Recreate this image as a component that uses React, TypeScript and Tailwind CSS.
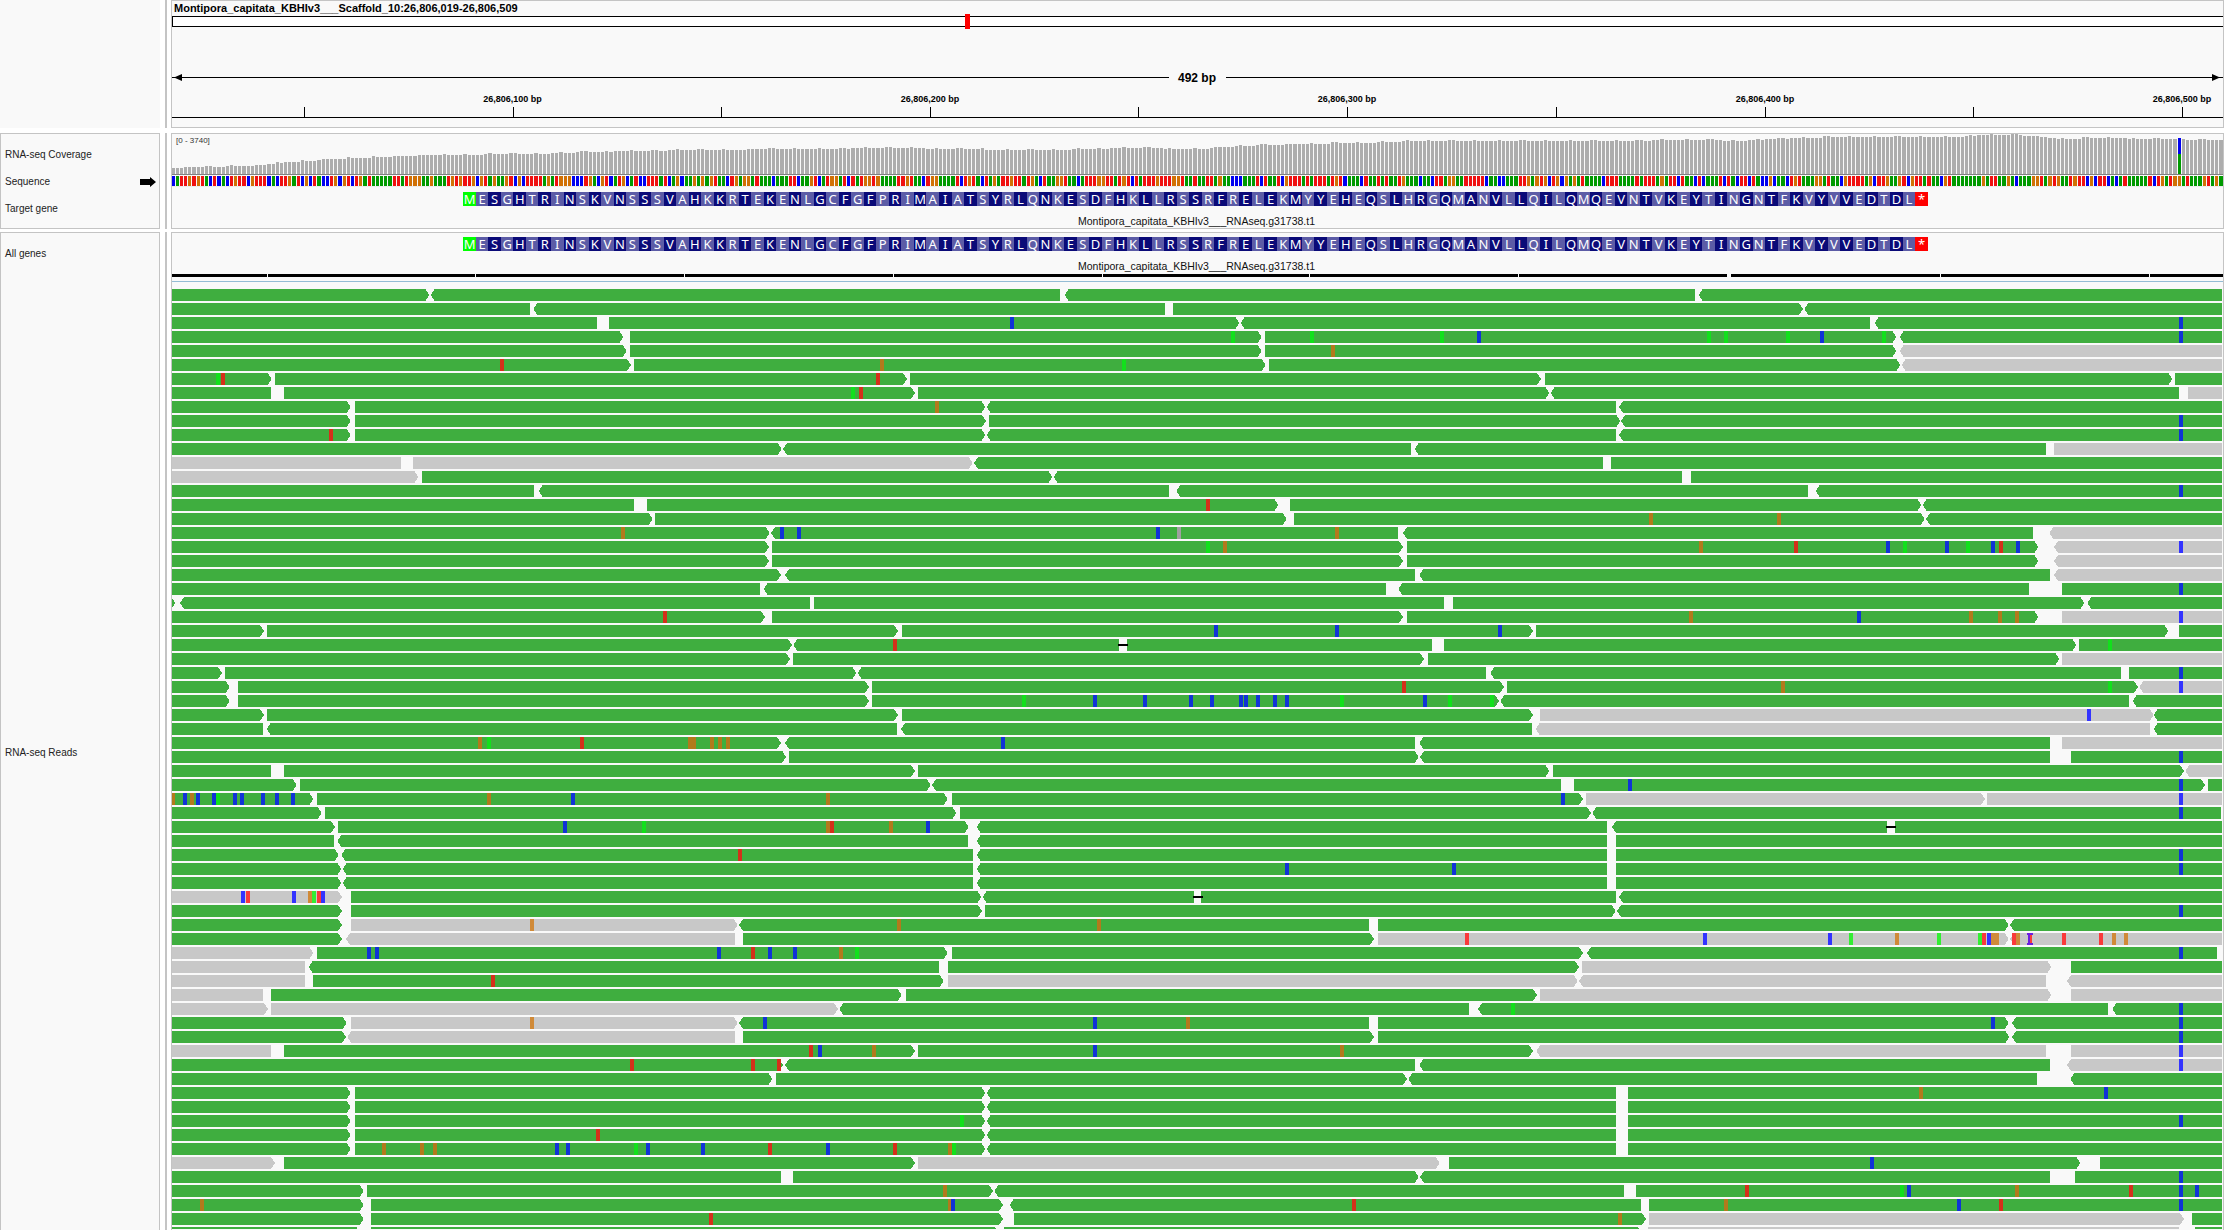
import React from "react";

const SANS = "font-['Liberation_Sans',Arial,sans-serif]";
const AA = "MESGHTRINSKVNSSSVAHKKRTEKENLGCFGFPRIMAIATSYRLQNKESDFHKLLRSSRFRELEKMYYEHEQSLHRGQMANVLLQILQMQEVNTVKEYTINGNTFKVYVVEDTDL*";
const GENE = "Montipora_capitata_KBHIv3___RNAseq.g31738.t1";
const PANEL_X = 172;
const BASE = 2052 / 492;

// [reads, marks] per row. Numbers are positions in a 1.5223x scale of the track; R adds 1568.
const ROWS: [string, string][] = [
  ["0-395> 397-1355< 1362-R753< R759-R1556<", ""],
  ["0-548 553-1515< 1527-R918> R920-R1556<", ""],
  ["0-650 668-R60> R62-R1020< R1027-R1556<", "b1282 bR1493"],
  ["0-690> 700-R94> R99-R1060> R1065-R1556<", "lR50 lR171 lR368 bR425 lR775 lR801 lR895 bR947 lR1041 bR1493"],
  ["0-695> 700-R94> R99-R1060> R1065-R1556<g", "oR202"],
  ["0-702> 706-R100> R105-R1066> R1068-R1556<g", "r505 o1084 l1452"],
  ["0-155> 160-1122> 1127-R519> R525-R1480> R1484-R1556", "l73 r80 r1078"],
  ["0-154 174-1134> 1139-R532> R534-R1490< R1504-R1556g", "l1040 r1052"],
  ["0-275> 282-1241> 1243-R633< R638-R1556<", "o1168"],
  ["0-275> 282-1242> 1247-R640> R641-R1556<", "bR1493"],
  ["0-275> 282-1241> 1243-R633< R638-R1556<", "r245 bR1493"],
  ["0-931> 933-R321< R327-R1288< R1300-R1556g", ""],
  ["0-352g 370-1222>g 1224-R613< R626-R1556", ""],
  ["0-378>g 384-1343> 1345-R734< R747-R1556", ""],
  ["0-554 561-1521< 1532-R926< R937-R1556<", "bR1493"],
  ["0-706 726-R119> R137-R1098> R1100-R1556<", "rR12"],
  ["0-735> 738-R132> R143-R1103> R1105-R1556<", "oR686 oR882"],
  ["0-913> 915-R301< R309-R1268< R1293-R1556<g", "o690 b932 b958 b1504 k1536 oR208"],
  ["0-912> 916-R309> R315-R1276> R1300-R1556<g", "lR12 oR38 oR762 rR908 bR1047 lR1073 bR1137 lR1169 bR1207 rR1219 bR1245 bR1493"],
  ["0-912> 916-R309> R315-R1276> R1300-R1556<g", ""],
  ["0-930> 936-R327< R334-R1294< R1300-R1556<g", ""],
  ["0-898 904-R283< R302-R1262< R1312-R1556", "bR1493"],
  ["0-8> 15-974< 980-R371 R385-R1346> R1351-R1556<", ""],
  ["0-906> 916-R309> R315-R1276> R1312-R1556g", "r754 oR748 bR1003 oR1174 oR1218 oR1244 bR1493"],
  ["0-143> 148-1108> 1114-R507> R512-R1474> R1490-R1556", "bR24 bR209 bR457"],
  ["0-947> 949-1445< 1457-R353 R371-R1334> R1338-R1556", "r1104 d1445 lR1385"],
  ["0-944> 948-R341> R347-R1308> R1312-R1556g", ""],
  ["0-79> 84-1045> 1047-R435< R442-R1402< R1414-R1556", "bR1493"],
  ["0-91> 104-1064> 1069-R463> R467-R1428> R1430-R1556<g", "rR311 oR888 lR1385 bR1493"],
  ["0-91> 104-1064> 1069-R455> R457-R1414< R1420-R1556<", "l1300 b1408 b1484 b1554 bR18 bR62 bR70 bR88 bR114 bR132 lR216 bR342 lR381 lR444"],
  ["0-143> 148-1108> 1114-R507> R518-R1452>g R1452-R1556<", "bR1353"],
  ["0-142 147-1107< 1113-R505< R511-R1446<g R1452-R1556<", ""],
  ["0-930> 936-R327< R334-R1294< R1312-R1556g", "o472 l486 r627 o792 o798 o825 o837 o849 b1268"],
  ["0-938> 942-R333> R335-R1294< R1326-R1556", "bR1493"],
  ["0-154 174-1134> 1139-R532> R537-R1498> R1500-R1556<g", ""],
  ["0-193> 198-1158> 1160-R550< R569-R1530> R1535-R1556", "bR655 bR1493"],
  ["0-218> 224-1184> 1190-R583> R588-R1195>g R1198-R1556g", "o5 b23 o34 b42 b67 l73 b99 b110 b142 b163 b188 o486 b613 o1002 bR553 bR1493"],
  ["0-231> 236-1197> 1203-R595> R597-R1554<", "bR1493"],
  ["0-251> 256-1216> 1228-R620< R627-R1046< R1058-R1556", "b601 l722 o1002 r1008 o1098 b1154 dR1046"],
  ["0-250 255-1215< 1228-R620< R633-R1556", ""],
  ["0-257> 261-1222< 1228-R620< R633-R1556", "r868 bR1493"],
  ["0-261> 263-1222< 1228-R620< R633-R1556", "bR132 bR387 bR1493"],
  ["0-261> 263-1222< 1228-R620< R633-R1556", ""],
  ["0-262>g 276-1235> 1237-1559< 1570-R633 R638-R1556<", "b111 r118 b189 o213 l219 r227 b233 d1559"],
  ["0-262> 276-1236> 1241-R633> R635-R1556<", "bR1493"],
  ["0-262> 276-864>g 866-R257< R271-R1231> R1233-R1556<", "o551 o1110 o1414"],
  ["0-262> 268-860<g 872-R265> R271-R1231>g R1233-R1556<g", "rR406 bR769 bR959 lR991 oR1061 lR1125 lR1187 rR1194 bR1201 oR1207 oR1213 rR1239 oR1245 pR1262 rR1315 rR1372 oR1391 oR1410"],
  ["0-218>g 224-1184> 1190-R583> R589-R1548<", "b303 b315 b836 r887 b913 b951 o1021 l1046 bR1493"],
  ["0-206g 211-1171< 1184-R577> R582-R1296>g R1326-R1556", ""],
  ["0-206g 218-1178> 1184-R575>g R577-R1288<g R1320-R1556<g", "r492"],
  ["0-142g 154-1114> 1120-R513> R518-R1296>g R1326-R1556g", ""],
  ["0-149>g 154-1017>g 1019-R410< R423-R1382< R1389-R1556<", "lR477 bR1493"],
  ["0-269> 276-864>g 866-R257< R271-R1231> R1236-R1556<", "o551 b906 b1408 o1549 bR1207 bR1493"],
  ["0-268> 270-860<g 872-R265> R271-R1232> R1236-R1556<", "bR1493"],
  ["0-154g 174-1134> 1139-R507> R512-R1288<g R1326-R1556g", "r976 b990 o1072 b1408 oR216 bR1493"],
  ["0-933> 936-R327< R334-R1294< R1320-R1556<g", "r703 r887 r927 bR1493"],
  ["0-917> 923-R315> R317-R1274< R1325-R1556<", ""],
  ["0-275> 282-1241> 1243-R633< R652-R1556", "oR1098 bR1379"],
  ["0-275> 282-1241> 1243-R633< R652-R1556", ""],
  ["0-275> 282-1241> 1243-R633< R652-R1556", "l1206 bR1493"],
  ["0-275> 282-1241> 1243-R633< R652-R1556", "r652"],
  ["0-275> 282-1241> 1243-R633< R652-R1556", "o326 o384 o404 b589 b606 l709 b728 b811 r913 b1002 r1104 o1187 l1193"],
  ["0-160>g 174-1134> 1139-R365>g R379-R1340> R1370-R1556", "bR1023"],
  ["0-930 948-R333> R335-R1294< R1332-R1556", "bR1493"],
  ["0-295> 300-1253> 1255-R645< R664-R1556", "o1180 rR833 lR1069 bR1079 oR1244 rR1417 bR1493 bR1518"],
  ["0-295> 306-1268> 1278-R671< R684-R1556", "o48 o1187 b1192 rR234 oR800 bR1155 rR1219 bR1493"],
  ["0-295> 306-1268> 1285-R679> R684-R1498>g R1510-R1556", "r824 oR640"],
  ["0-290> 306-1262> 1270-R673> R682-R1490g R1515-R1556", ""],
];

const COL: Record<string, [string, string]> = {
  b: ["#1033d6", "#3333ff"],
  r: ["#d4301a", "#f93a3a"],
  o: ["#b27a1c", "#d08a38"],
  l: ["#12e01c", "#33ee33"],
  k: ["#a0a0a0", "#a0a0a0"],
};

const u = (s: string) => (s[0] === "R" ? Number(s.slice(1)) + 1568 : Number(s));
const px = (v: number) => Math.min(2222, Math.max(172, 170 + v / 1.5223)) - PANEL_X;

type Read = { a: number; b: number; dir: string; gray: boolean };

function parseReads(s: string): Read[] {
  return s.split(" ").map((t) => {
    const m = t.match(/^(R?\d+)-(R?\d+)([<>]?)(g?)$/)!;
    return { a: px(u(m[1])), b: px(u(m[2])), dir: m[3], gray: m[4] === "g" };
  });
}

function shape(r: Read, y: number) {
  const t = y, h = y + 12, c = y + 6, n = 4;
  if (r.dir === ">") return `${r.a},${t} ${r.b - n},${t} ${r.b},${c} ${r.b - n},${h} ${r.a},${h}`;
  if (r.dir === "<") return `${r.a + n},${t} ${r.b},${t} ${r.b},${h} ${r.a + n},${h} ${r.a},${c}`;
  return `${r.a},${t} ${r.b},${t} ${r.b},${h} ${r.a},${h}`;
}

function Pileup() {
  return (
    <svg width={2051} height={940} className="block" shapeRendering="crispEdges">
      {ROWS.map(([rs, ms], i) => {
        const y = i * 14;
        const reads = parseReads(rs);
        return (
          <g key={i}>
            {reads.map((r, j) => (
              <polygon key={j} points={shape(r, y)} fill={r.gray ? "#c8c8c8" : "#3fae3f"} />
            ))}
            {ms
              .split(" ")
              .filter(Boolean)
              .map((t, j) => {
                const kind = t[0];
                const x = px(u(t.slice(1)));
                if (kind === "d") return <rect key={j} x={x - 1} y={y + 5} width={10} height={2} fill="#000" />;
                if (kind === "p")
                  return (
                    <g key={j} fill="#6a1ee0">
                      <rect x={x + 1} y={y} width={2} height={12} fill="#f93a3a" />
                      <rect x={x - 2} y={y} width={6} height={2} />
                      <rect x={x - 2} y={y + 10} width={6} height={2} />
                      <rect x={x - 1} y={y} width={2} height={12} />
                    </g>
                  );
                const onGray = reads.some((r) => r.gray && x >= r.a && x <= r.b);
                return <rect key={j} x={Math.round(x - 2)} y={y} width={4} height={12} fill={COL[kind][onGray ? 1 : 0]} />;
              })}
          </g>
        );
      })}
    </svg>
  );
}

const TOPS: [number, number][] = [
  [172, 167], [196, 166], [254, 165], [267, 163], [287, 161], [308, 160], [327, 158.5], [354, 157], [388, 156], [433, 154],
  [533, 153], [590, 151], [634, 150], [700, 149], [900, 147], [950, 148], [1015, 149], [1060, 149], [1125, 147], [1200, 148],
  [1240, 145], [1270, 144], [1300, 143], [1360, 142], [1420, 140], [1600, 140], [1700, 139], [1740, 140], [1770, 138],
  [1840, 136], [1960, 136], [1980, 134], [2010, 134], [2030, 135], [2060, 138], [2100, 137], [2150, 138], [2222, 139],
];

function topAt(x: number) {
  for (let i = 1; i < TOPS.length; i++) {
    if (x <= TOPS[i][0]) {
      const [x0, y0] = TOPS[i - 1];
      const [x1, y1] = TOPS[i];
      return y0 + ((y1 - y0) * (x - x0)) / (x1 - x0);
    }
  }
  return 139;
}

const PREFIX = "CATTGTGTACTCACTGTTCGTTTCACTTGATCGCTACCTGCGTCT";
const BASECOL: Record<string, string> = { A: "#009a00", C: "#0000f0", G: "#d17105", T: "#f01010" };

function baseAt(i: number) {
  if (i < PREFIX.length) return PREFIX[i];
  const v = Math.abs(Math.sin(i * 12.9898) * 43758.5453) % 1;
  return v < 0.36 ? "A" : v < 0.66 ? "T" : v < 0.84 ? "G" : "C";
}

function CoverageAndSequence() {
  const bars = Array.from({ length: 492 }, (_, i) => {
    const x0 = Math.floor(i * BASE);
    const x1 = Math.floor((i + 1) * BASE) - 1;
    const jitter = Math.abs(Math.sin(i * 3.7)) > 0.93 ? 1 : 0;
    const top = Math.round(topAt(PANEL_X + x0)) - jitter;
    return { x0, w: x1 - x0, top, base: baseAt(i) };
  });
  const special = bars.findIndex((b) => PANEL_X + b.x0 >= 2178);
  return (
    <svg width={2051} height={52} className="block" shapeRendering="crispEdges">
      {bars.map((b, i) =>
        i === special ? (
          <g key={i}>
            <rect x={b.x0} y={b.top - 133} width={b.w} height={153 - b.top} fill="#0000f0" />
            <rect x={b.x0} y={20} width={b.w} height={20} fill="#009a00" />
          </g>
        ) : (
          <rect key={i} x={b.x0} y={b.top - 133} width={b.w} height={173 - b.top} fill="#adadad" />
        ),
      )}
      <rect x={0} y={40} width={2051} height={1} fill="#808080" />
      {bars.map((b, i) => (
        <rect key={i} x={b.x0} y={42} width={b.w} height={10} fill={BASECOL[b.base]} />
      ))}
    </svg>
  );
}

function AminoRow() {
  return (
    <div className="flex h-[14px] pl-[291.4px]">
      {AA.split("").map((c, i) => (
        <div
          key={i}
          className={
            "flex w-[12.52px] shrink-0 items-center justify-center font-['Noto_Sans',sans-serif] text-[13px] leading-none text-white " +
            (c === "*" ? "bg-[#ff0000]" : i === 0 ? "bg-[#00ff00]" : i % 2 ? "bg-[#5c5ca6]" : "bg-[#0a0a78]")
          }
        >
          {c}
        </div>
      ))}
    </div>
  );
}

function GeneLabel() {
  return <div className={SANS + " h-[12px] pl-[906px] text-[10.5px] leading-[12px] whitespace-nowrap text-[#111]"}>{GENE}</div>;
}

function GeneBar() {
  const breaks = [266.5, 474.5, 683.5, 893, 1102, 1309, 1518, 1727, 1940, 2149];
  return (
    <svg width={2051} height={3} className="block" shapeRendering="crispEdges">
      <rect x={0} y={0} width={2051} height={3} fill="#000" />
      {breaks.map((b) => (
        <rect key={b} x={b - PANEL_X} y={0} width={b === 1727 ? 4 : 1} height={3} fill="#f9f9f9" />
      ))}
    </svg>
  );
}

function Ruler() {
  const ticks = [303.5, 512.5, 721, 930, 1138, 1347, 1556, 1765, 1973, 2182];
  const labels: [number, string][] = [
    [512.5, "26,806,100 bp"],
    [930, "26,806,200 bp"],
    [1347, "26,806,300 bp"],
    [1765, "26,806,400 bp"],
    [2182, "26,806,500 bp"],
  ];
  const X = (v: number) => v - PANEL_X;
  return (
    <svg width={2051} height={100} className={SANS + " block"}>
      <g shapeRendering="crispEdges" fill="#000">
        <rect x={0} y={50} width={X(1169)} height={1} />
        <rect x={X(1226)} y={50} width={2051 - X(1226)} height={1} />
        <rect x={0} y={90} width={2051} height={1} />
        {ticks.map((t) => (
          <rect key={t} x={Math.round(X(t))} y={80} width={1} height={10} />
        ))}
      </g>
      <polygon points={`${X(174)},50.5 ${X(182)},47 ${X(182)},54`} fill="#000" />
      <polygon points={`${X(2220)},50.5 ${X(2212)},47 ${X(2212)},54`} fill="#000" />
      <text x={X(1197)} y={54.5} textAnchor="middle" fontSize={12} fontWeight={700} fill="#000">
        492 bp
      </text>
      {labels.map(([x, s]) => (
        <text key={s} x={X(x)} y={75} textAnchor="middle" fontSize={9} fontWeight={700} fill="#000">
          {s}
        </text>
      ))}
    </svg>
  );
}

function Splitter() {
  return <div className="mr-[4px] ml-[5px] w-[2px] shrink-0 self-stretch bg-[#c4c4c4]" />;
}

function Label({ children, extra }: { children: string; extra?: React.ReactNode }) {
  return (
    <div className={SANS + " flex h-[27px] items-center pl-[4px] text-[10px] leading-none whitespace-nowrap text-[#222]"}>
      {children}
      {extra}
    </div>
  );
}

const PANEL = "relative w-[2053px] shrink-0 overflow-hidden border border-[#c4c4c4] bg-[#f9f9f9]";
const SIDE = "w-[160px] shrink-0 border border-[#c4c4c4] bg-[#f9f9f9]";

export default function App() {
  return (
    <div className="flex h-[1230px] w-[2240px] flex-col overflow-hidden bg-white">
      <div className="flex h-[128px] shrink-0">
        <div className="w-[160px] shrink-0 bg-[#f9f9f9]" />
        <Splitter />
        <div className={PANEL + " flex flex-col"}>
          <div className={SANS + " h-[15px] pl-[2px] text-[11px] leading-[15px] font-bold whitespace-nowrap text-black"}>
            Montipora_capitata_KBHIv3___Scaffold_10:26,806,019-26,806,509
          </div>
          <div className="relative h-[11px] border-y border-l border-black bg-white">
            <div className="absolute top-[-3px] left-[792px] h-[15px] w-[5px] bg-[#ff0000]" />
          </div>
          <div className="mt-auto">
            <Ruler />
          </div>
        </div>
      </div>

      <div className="mt-[5px] flex h-[96px] shrink-0">
        <div className={SIDE + " pt-[7px]"}>
          <Label>RNA-seq Coverage</Label>
          <Label
            extra={
              <svg width={16} height={10} className="mr-[3px] ml-auto" viewBox="0 0 16 10">
                <polygon points="0,2 10,2 10,0 16,5 10,10 10,8 0,8" fill="#000" />
              </svg>
            }
          >
            Sequence
          </Label>
          <Label>Target gene</Label>
        </div>
        <Splitter />
        <div className={PANEL}>
          <div className={SANS + " absolute top-[2px] left-[4px] text-[8px] leading-[10px] text-[#333]"}>[0 - 3740]</div>
          <div className="border-b border-[#ececec]">
            <CoverageAndSequence />
          </div>
          <div className="mt-[5px]">
            <AminoRow />
          </div>
          <div className="mt-[9px]">
            <GeneLabel />
          </div>
        </div>
      </div>

      <div className="mt-[3px] flex min-h-0 flex-1">
        <div className={SIDE + " border-b-0 pt-[7px]"}>
          <Label>All genes</Label>
          <div className="mt-[472px]">
            <Label>RNA-seq Reads</Label>
          </div>
        </div>
        <Splitter />
        <div className={PANEL + " border-b-0"}>
          <div className="mt-[4px]">
            <AminoRow />
          </div>
          <div className="mt-[9px]">
            <GeneLabel />
          </div>
          <div className="mt-[2px]">
            <GeneBar />
          </div>
          <div className="mt-[4px] h-px bg-[#94bcd4]" />
          <div className="mt-[7px]">
            <Pileup />
          </div>
        </div>
      </div>
    </div>
  );
}
